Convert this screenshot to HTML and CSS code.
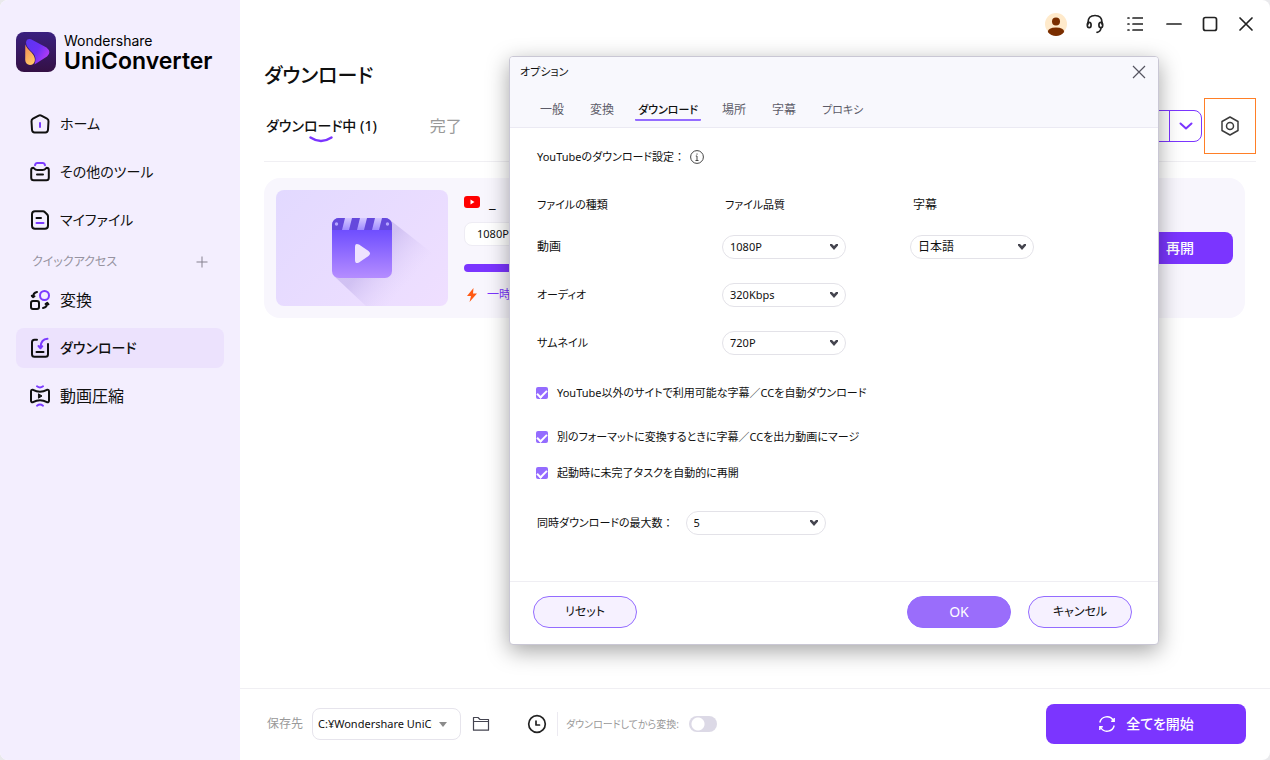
FILE: index.html
```html
<!DOCTYPE html>
<html lang="ja">
<head>
<meta charset="utf-8">
<meta name="viewport" content="width=device-width, initial-scale=1">
<title>Wondershare UniConverter</title>
<link rel="stylesheet" href="styles.css">
</head>
<body>
<div class="app">
  <aside class="sidebar">
    <div class="brand">
      <svg class="brand-mark" viewBox="0 0 40 40" aria-hidden="true">
        <defs>
          <linearGradient id="tile" x1="0" y1="0" x2="0" y2="1"><stop offset="0" stop-color="#3a207f"/><stop offset="1" stop-color="#341044"/></linearGradient>
          <linearGradient id="play" x1="0" y1="0" x2="1" y2=".6"><stop offset="0" stop-color="#5a35f0"/><stop offset=".55" stop-color="#6d30f5"/><stop offset="1" stop-color="#b43cf5"/></linearGradient>
          <linearGradient id="flame" x1="0" y1="0" x2=".5" y2="1"><stop offset="0" stop-color="#f08a55"/><stop offset="1" stop-color="#ffc566"/></linearGradient>
        </defs>
        <rect width="40" height="40" rx="8" fill="url(#tile)"/>
        <path d="M10 10.500Q10.500 6.200 15 7.200L30.500 15.500Q36 20 31 24.500L18.500 32.500Q21 25 17 21Q10 15 10 10.500Z" fill="url(#play)"/>
        <path d="M9.300 12.500Q10.500 16 15.500 20.500Q19.500 25 18.800 29Q17.800 33 14 33Q9.500 32.500 9.200 28Z" fill="url(#flame)"/>
      </svg>
      <div class="brand-text">
        <span class="brand-small">Wondershare</span>
        <span class="brand-name">UniConverter</span>
      </div>
    </div>
    <nav class="nav" aria-label="メイン">
      <a class="nav-item" href="#home">
        <svg viewBox="0 0 20 20" class="nav-icon"><path d="M8.700 1.700 3 4.700Q1.400 5.500 1.500 7.200L2 15.800Q2.200 18.500 4.600 18.500H15.400Q17.800 18.500 18 15.800L18.500 7.200Q18.600 5.500 17 4.700L11.300 1.700Q10 1 8.700 1.700Z"/><path class="accent" d="M10 9V13"/></svg>
        <span>ホーム</span>
      </a>
      <a class="nav-item" href="#tools">
        <svg viewBox="0 0 20 20" class="nav-icon"><path class="accent" d="M5 3.200Q5.500 1 7.300 1H12.700Q14.500 1 15 3.200"/><path d="M3.500 5.800Q1.200 5.800 1.200 8V15.800Q1.200 18.300 3.700 18.300H16.300Q18.800 18.300 18.800 15.800V8Q18.800 5.800 16.500 5.800Q14.500 8 12.500 8H7.500Q5.500 8 3.500 5.800ZM7 12.500H13"/></svg>
        <span>その他のツール</span>
      </a>
      <a class="nav-item" href="#files">
        <svg viewBox="0 0 20 20" class="nav-icon"><path d="M5 1.200H13Q14 1.200 15 2.200L17 4.200Q18 5.200 18 6.200V15.500Q18 18.800 15 18.800H5Q2 18.800 2 15.800V4.200Q2 1.200 5 1.200ZM6.500 8H11"/><path class="accent" d="M6.500 13H13.500"/></svg>
        <span>マイファイル</span>
      </a>
      <div class="nav-label">
        <span>クイックアクセス</span>
        <button class="icon-btn add" type="button" aria-label="追加"><svg viewBox="0 0 12 12"><path d="M6 .5V11.500M.5 6H11.500"/></svg></button>
      </div>
      <a class="nav-item wide-text" href="#convert">
        <svg viewBox="0 0 20 20" class="nav-icon"><rect x="1" y="11" width="8" height="8" rx="2"/><circle class="accent" cx="14.500" cy="5.500" r="4.500"/><path d="M3 7Q3 3 7 2M1.800 5.800 3 7.200 4.500 6.200M17.300 13Q17.300 17 13 18M15.500 14 17.300 12.800 18.500 14.300"/></svg>
        <span>変換</span>
      </a>
      <a class="nav-item active" href="#download" aria-current="page">
        <svg viewBox="0 0 20 20" class="nav-icon"><path d="M7 1.800H4.500Q2 1.800 2 4.300V16.300Q2 18.800 4.500 18.800H15.500Q18 18.800 18 16.300V6M6.500 14H13.500"/><path class="accent" d="M17.500 .8Q11 1.200 10.500 9M8.500 8 10.500 10.300 12.300 8.200"/></svg>
        <span>ダウンロード</span>
      </a>
      <a class="nav-item wide-text" href="#compress">
        <svg viewBox="0 0 20 20" class="nav-icon"><path d="M3 3.800Q10 7.500 17 3.800Q19 3.500 19 5.500V14.500Q19 16.500 17 16.200Q10 12.500 3 16.200Q1 16.500 1 14.500V5.500Q1 3.500 3 3.800Z"/><path d="M8.800 8 12 10 8.800 12Z" fill="#101010" stroke-width="1"/><path class="accent" d="M7 .3Q10 2.500 13 .3M7 19.700Q10 17.500 13 19.700"/></svg>
        <span>動画圧縮</span>
      </a>
    </nav>
  </aside>

  <main class="main">
    <header class="topbar">
      <div class="bar-group">
        <button class="icon-btn" type="button" aria-label="アカウント"><svg width="22" height="24" viewBox="0 0 22 24"><circle cx="11" cy="12" r="11" fill="#ffeacb"/><circle cx="11" cy="9.500" r="4" fill="#7a2e00"/><path d="M2.800 20Q3 15.500 11 15.500Q19 15.500 19.200 20Q16 24 11 24Q6 24 2.800 20Z" fill="#7a2e00"/></svg></button>
        <button class="icon-btn" type="button" aria-label="サポート"><svg class="line" width="18" height="20" viewBox="0 0 18 20"><path d="M2 10V8.500Q2 1.500 9 1.500Q16 1.500 16 8.500V10"/><ellipse cx="3.200" cy="11" rx="1.900" ry="2.700"/><ellipse cx="14.800" cy="11" rx="1.900" ry="2.700"/><path d="M15 14Q14.500 18 11 18.300"/></svg></button>
        <button class="icon-btn" type="button" aria-label="メニュー"><svg class="line" width="16" height="16" viewBox="0 0 16 16"><path d="M1 2H2M6 2H15.500M1 8H2M6 8H15.500M1 14H2M6 14H15.500"/></svg></button>
      </div>
      <div class="bar-group window">
        <button class="icon-btn" type="button" aria-label="最小化"><svg class="line" width="16" height="16" viewBox="0 0 16 16"><path d="M1 8H15"/></svg></button>
        <button class="icon-btn" type="button" aria-label="最大化"><svg class="line" width="16" height="16" viewBox="0 0 16 16"><rect x="1.500" y="1.500" width="13" height="13" rx="2"/></svg></button>
        <button class="icon-btn" type="button" aria-label="閉じる"><svg class="line" width="16" height="16" viewBox="0 0 16 16"><path d="M2 2 14 14M14 2 2 14"/></svg></button>
      </div>
    </header>

    <section class="content">
      <h1 class="title">ダウンロード</h1>
      <div class="toolbar">
        <div class="tabs" role="tablist">
          <button class="tab selected" type="button" role="tab" aria-selected="true">ダウンロード中 (1)<svg class="smile" viewBox="0 0 24 7"><path d="M1.500 1.500Q12 8.500 22.500 1.500"/></svg></button>
          <button class="tab" type="button" role="tab" aria-selected="false">完了</button>
        </div>
        <div class="tools">
          <div class="split">
            <button class="split-main" type="button" aria-label="URLを貼り付け"></button>
            <button class="split-more" type="button" aria-label="その他"><svg width="14" height="8" viewBox="0 0 14 8"><path d="M1.500 1.500 7 6.500 12.500 1.500"/></svg></button>
          </div>
          <button class="settings" type="button" aria-label="設定"><svg width="20" height="20" viewBox="0 0 20 20"><path d="M10 1 18 5.500V14.500L10 19 2 14.500V5.500Z"/><circle cx="10" cy="10" r="3.500"/></svg></button>
        </div>
      </div>
      <article class="card">
        <div class="thumb">
          <svg width="172" height="116" viewBox="0 0 172 116" aria-hidden="true">
            <defs>
              <linearGradient id="clap" x1="0" y1="0" x2="0" y2="1"><stop offset=".15" stop-color="#6a4aff"/><stop offset="1" stop-color="#b58dff"/></linearGradient>
              <linearGradient id="cast" gradientUnits="userSpaceOnUse" x1="86" y1="58" x2="140" y2="105"><stop offset=".2" stop-color="#b8a6e6" stop-opacity=".5"/><stop offset=".8" stop-color="#d9c8f8" stop-opacity="0"/></linearGradient>
              <linearGradient id="stripe" x1="0" y1="0" x2="0" y2="1"><stop offset="0" stop-color="#d4c8ff"/><stop offset="1" stop-color="#a08cff"/></linearGradient>
              <clipPath id="round"><rect x="56" y="28" width="60" height="60" rx="7"/></clipPath>
            </defs>
            <path d="M114 30 165 70V116H90L58 86Z" fill="url(#cast)"/>
            <g clip-path="url(#round)">
              <rect x="56" y="28" width="60" height="60" fill="url(#clap)"/>
              <rect x="56" y="28" width="60" height="12" fill="#6549dc"/>
              <path d="M69 28H76L73 40H66ZM84 28H91L88 40H81ZM99 28H106L103 40H96Z" fill="url(#stripe)"/>
            </g>
            <circle cx="60.500" cy="34" r="1.700" fill="#b5a5ff"/><circle cx="111.500" cy="34" r="1.700" fill="#b5a5ff"/>
            <path d="M79 57Q79 52.500 83 54.500L92.500 61Q95.500 63.500 92.500 66L83 72.500Q79 74.500 79 70Z" fill="#eee3ff"/>
          </svg>
        </div>
        <div class="task">
          <div class="task-name"><svg width="16" height="12" viewBox="0 0 16 12"><rect width="16" height="12" rx="3" fill="#f00"/><path d="M6.500 3.500 10.500 6 6.500 8.500Z" fill="#fff"/></svg><span>_</span></div>
          <span class="chip">1080P</span>
          <div class="progress"></div>
          <div class="status"><svg width="10" height="14" viewBox="0 0 10 14"><path d="M6.500 0 0 8H4L2.500 14 10 5.500H6Z" fill="#ff5a14"/></svg><span>一時停止</span></div>
        </div>
        <button class="resume" type="button">再開</button>
      </article>
    </section>

    <footer class="bottom">
      <label class="muted" for="dest">保存先</label>
      <div class="path-box">
        <select id="dest" class="path"><option>C:¥Wondershare UniConverter</option></select>
        <svg class="path-arrow" viewBox="0 0 8 5"><path d="M0 0H8L4 5Z"/></svg>
      </div>
      <button class="icon-btn folder" type="button" aria-label="フォルダーを開く"><svg class="thin" width="18" height="16" viewBox="0 0 18 16"><path d="M1.500 14.200V1.500H6L8 3.500H16.500V14.200ZM1.500 5.500H16.500"/></svg></button>
      <button class="icon-btn clock" type="button" aria-label="スケジュール"><svg class="line" width="20" height="20" viewBox="0 0 20 20"><circle cx="10" cy="10" r="8.300"/><path d="M9 7V11H12.500"/></svg></button>
      <label class="muted after" for="after">ダウンロードしてから変換:</label>
      <input class="switch" id="after" type="checkbox" role="switch">
      <button class="start" type="button"><svg width="18" height="18" viewBox="0 0 18 18"><path d="M1.800 7.500A7.300 7.300 0 0 1 15.300 5.500M16.200 3V6.300H13.200M16.200 10.500A7.300 7.300 0 0 1 2.700 12.500M1.800 15V11.700H4.800"/></svg><span>全てを開始</span></button>
    </footer>
  </main>

  <section class="dialog" role="dialog" aria-labelledby="dlg-title">
    <header class="dlg-head">
      <div class="dlg-bar">
        <h2 class="dlg-title" id="dlg-title">オプション</h2>
        <button class="icon-btn dlg-close" type="button" aria-label="閉じる"><svg width="14" height="14" viewBox="0 0 14 14"><path d="M1 1 13 13M13 1 1 13"/></svg></button>
      </div>
      <div class="dlg-tabs" role="tablist">
        <button class="dlg-tab wide-text" type="button" role="tab">一般</button>
        <button class="dlg-tab wide-text" type="button" role="tab">変換</button>
        <button class="dlg-tab selected" type="button" role="tab" aria-selected="true">ダウンロード</button>
        <button class="dlg-tab wide-text" type="button" role="tab">場所</button>
        <button class="dlg-tab wide-text" type="button" role="tab">字幕</button>
        <button class="dlg-tab" type="button" role="tab">プロキシ</button>
      </div>
    </header>
    <div class="dlg-body">
      <div class="heading"><span>YouTubeのダウンロード設定<span class="colon">：</span></span><svg width="14" height="14" viewBox="0 0 14 14"><circle cx="7" cy="7" r="6.400"/><path d="M7 6V10.500M7 3.500V4.700M5.800 6H7M5.500 10.500H8.500"/></svg></div>
      <div class="grid grid-head"><span>ファイルの種類</span><span class="col">ファイル品質</span><span class="col wide-text">字幕</span></div>
      <div class="grid-rows">
        <div class="grid">
          <label class="wide-text" for="video">動画</label>
          <div class="pick"><select id="video"><option>1080P</option></select><svg viewBox="0 0 8 6"><path d="M0 0H2L4 2 6 0H8V1.500L4 6 0 1.500Z"/></svg></div>
          <div class="pick wide-text"><select aria-label="字幕"><option>日本語</option></select><svg viewBox="0 0 8 6"><path d="M0 0H2L4 2 6 0H8V1.500L4 6 0 1.500Z"/></svg></div>
        </div>
        <div class="grid">
          <label for="audio">オーディオ</label>
          <div class="pick"><select id="audio"><option>320Kbps</option></select><svg viewBox="0 0 8 6"><path d="M0 0H2L4 2 6 0H8V1.500L4 6 0 1.500Z"/></svg></div>
        </div>
        <div class="grid">
          <label for="image">サムネイル</label>
          <div class="pick"><select id="image"><option>720P</option></select><svg viewBox="0 0 8 6"><path d="M0 0H2L4 2 6 0H8V1.500L4 6 0 1.500Z"/></svg></div>
        </div>
      </div>
      <div class="checks">
        <label class="check lead"><input type="checkbox" checked><span>YouTube以外のサイトで利用可能な字幕／CCを自動ダウンロード</span></label>
        <label class="check"><input type="checkbox" checked><span>別のフォーマットに変換するときに字幕／CCを出力動画にマージ</span></label>
        <label class="check"><input type="checkbox" checked><span>起動時に未完了タスクを自動的に再開</span></label>
      </div>
      <div class="limit">
        <label for="limit">同時ダウンロードの最大数<span class="colon">：</span></label>
        <div class="pick wide"><select id="limit"><option>5</option></select><svg viewBox="0 0 8 6"><path d="M0 0H2L4 2 6 0H8V1.500L4 6 0 1.500Z"/></svg></div>
      </div>
    </div>
    <footer class="dlg-foot">
      <button class="pill" type="button">リセット</button>
      <button class="pill primary" type="button">OK</button>
      <button class="pill" type="button">キャンセル</button>
    </footer>
  </section>
</div>
</body>
</html>
```
FILE: styles.css
```css
* { box-sizing: border-box; }

body {
  margin: 0;
  background: #e9e9ec;
  color: #101010;
  font: 12px/18px "Noto Sans", "Noto Sans CJK JP", sans-serif;
  font-feature-settings: "palt";
}

button, select, input { font: inherit; color: inherit; font-feature-settings: inherit; }
button { padding: 0; border: 0; background: none; cursor: pointer; white-space: nowrap; }
a { color: inherit; text-decoration: none; }
svg { display: block; flex: none; }

.app {
  position: relative;
  display: grid;
  grid-template-columns: 240px 1fr;
  min-height: 100vh;
  border-radius: 8px;
  overflow: hidden;
  background: #fff;
}

.icon-btn { display: grid; place-items: center; }
.line { fill: none; stroke: #222; stroke-width: 1.700; stroke-linecap: round; stroke-linejoin: round; }
.thin { fill: none; stroke: #444450; stroke-width: 1.2; stroke-linejoin: round; }
.colon { font-feature-settings: normal; }

/* Sidebar */
.sidebar { padding: 32px 16px; background: #f3eefe; }
.brand { display: flex; gap: 8px; height: 40px; }
.brand-mark { width: 40px; height: 40px; }
.brand-text { display: flex; flex-direction: column; font-family: Inter, sans-serif; color: #000; }
.brand-small { font-size: 14px; line-height: 18px; }
.brand-name { font-size: 23px; line-height: 22px; font-weight: 600; }

.nav { display: grid; gap: 8px; margin-top: 32px; }
.nav-item {
  display: flex;
  align-items: center;
  gap: 10px;
  height: 40px;
  padding: 0 14px;
  border-radius: 8px;
  font-size: 14px;
  line-height: 24px;
}
.nav-item.wide-text { font-size: 16px; }
.nav-item.active { background: #ece2fd; font-weight: 500; }
.nav-icon { width: 20px; height: 20px; fill: none; stroke: #101010; stroke-width: 2; stroke-linecap: round; stroke-linejoin: round; overflow: visible; }
.nav-icon .accent { stroke: #7b3bff; }
.nav-label { display: flex; align-items: center; justify-content: space-between; height: 24px; padding: 4px 16px 0; color: #9693a0; font-size: 12px; line-height: 20px; }
.add svg { width: 12px; height: 12px; stroke: #85818f; }

/* Main column */
.main { display: flex; flex-direction: column; min-width: 0; }
.topbar { display: flex; align-items: center; justify-content: flex-end; gap: 19px; height: 48px; padding: 0 14px; }
.bar-group { display: flex; gap: 20px; }
.bar-group.window { gap: 16px; }
.topbar .icon-btn { width: 20px; height: 24px; }
.content { flex: 1; padding: 12px 25px 24px 24px; }
.title { margin: 0; font-size: 20px; line-height: 32px; font-weight: 500; }
.toolbar { display: flex; align-items: center; justify-content: space-between; height: 70px; margin-right: -11px; padding-bottom: 1px; border-bottom: 1px solid #f0eff3; }
.tabs { display: flex; gap: 53px; padding-left: 2px; }
.tab { position: relative; font-size: 16px; line-height: 24px; color: #999; }
.tab.selected { color: #101010; font-size: 14px; font-weight: 500; }
.smile { position: absolute; left: 50%; top: 100%; width: 24px; height: 7px; margin: -2px 0 0 -12px; fill: none; stroke: #7b35ff; stroke-width: 2.400; stroke-linecap: round; }
.tools { display: flex; align-items: center; gap: 2px; }
.split { display: flex; height: 32px; border: 1px solid #7b35ff; border-radius: 8px; }
.split-main { width: 160px; }
.split-more { display: grid; place-items: center; width: 32px; border-left: 1px solid #7b35ff; }
.split-more svg { fill: none; stroke: #7b35ff; stroke-width: 2; stroke-linecap: round; stroke-linejoin: round; }
.settings { display: grid; place-items: center; width: 52px; height: 56px; border: 1px solid #ff7f27; }
.settings svg { fill: none; stroke: #3c3c3c; stroke-width: 1.500; stroke-linejoin: round; }

.card { display: flex; align-items: center; gap: 16px; height: 140px; margin-top: 16px; padding: 12px; border-radius: 16px; background: #f8f6fd; }
.thumb { border-radius: 8px; overflow: hidden; background: linear-gradient(135deg, #e2d9ff, #efdfff); }
.task { flex: 1; display: grid; gap: 8px; justify-items: start; height: 116px; align-content: start; }
.task-name { display: flex; align-items: center; gap: 9px; height: 24px; font-size: 15px; }
.chip { padding: 0 12px; border-radius: 8px; background: #fff; border: 1px solid #eeecf4; font-size: 11px; line-height: 22px; }
.progress { width: 80%; height: 8px; margin-top: 10px; border-radius: 4px; background: #7b35ff; }
.status { display: flex; align-items: center; gap: 10px; margin: 6px 0 0 3px; color: #7b35ff; }
.resume { width: 106px; height: 32px; border-radius: 8px; background: #7b35ff; color: #fff; font-size: 14px; font-weight: 500; }

/* Bottom bar */
.bottom { display: flex; align-items: center; height: 72px; padding: 0 24px 1px 27px; border-top: 1px solid #f0eff3; }
.muted { color: #999; }
.path-box { position: relative; width: 149px; margin-left: 9px; }
.path { width: 100%; height: 32px; padding: 0 28px 0 5px; border: 1px solid #e6e4ec; border-radius: 8px; background: #fff; font-size: 11px; appearance: none; }
.path-arrow { position: absolute; right: 14px; top: 14px; width: 8px; height: 5px; fill: #8b8b8b; pointer-events: none; }
.folder { margin-left: 11px; }
.clock { margin-left: 37px; }
.after { margin-left: 10px; padding-left: 8px; border-left: 1px solid #eceaf1; font-size: 10px; line-height: 24px; white-space: nowrap; }
.switch { appearance: none; width: 28px; height: 16px; margin: 0 0 0 10px; border: 0; border-radius: 8px; background: radial-gradient(circle at 9px 8px, #fff 6px, transparent 7px) #dcd9e6; }
.start { display: flex; align-items: center; justify-content: center; gap: 10px; width: 200px; height: 40px; margin-left: auto; border-radius: 8px; background: #7b35ff; color: #fff; font-size: 14px; font-weight: 500; }
.start svg { fill: none; stroke: #fff; stroke-width: 1.400; }

/* Options window, floating over the page */
.dialog {
  position: absolute;
  left: 509px;
  top: 56px;
  width: 650px;
  border: 1px solid #c9c7d4;
  border-radius: 4px;
  background: #fff;
  box-shadow: 0 6px 22px rgba(0, 0, 0, .36);
  overflow: hidden;
  font-size: 11px;
}
.dialog .wide-text { font-size: 12px; }
.dlg-head { background: #f8f8fd; border-bottom: 1px solid #ebeaf3; }
.dlg-bar { display: flex; align-items: center; justify-content: space-between; height: 30px; padding: 0 12px 0 10px; }
.dlg-title { margin: 0; font-size: 11px; font-weight: 400; }
.dlg-close svg { fill: none; stroke: #555460; stroke-width: 1.200; }
.dlg-tabs { display: flex; gap: 16px; height: 40px; padding: 10px 25px 0; }
.dlg-tab { height: 24px; padding: 3px 5px 0; border-bottom: 2px solid transparent; color: #5c5b68; }
.dlg-tab.selected { padding: 3px 3px 0; border-color: #946cff; border-radius: 1px; color: #101010; font-weight: 500; }
.dlg-body { padding: 17px 26px 46px 27px; }
.heading { display: flex; align-items: center; gap: 5px; height: 24px; }
.heading svg { fill: none; stroke: #444; }
.grid { display: grid; grid-template-columns: 185px 188px 124px; align-items: center; height: 24px; }
.grid-head { margin: 24px 0 18px; }
.col { padding-left: 3px; }
.grid-rows { display: grid; gap: 24px; }
.pick { position: relative; width: 124px; }
.pick.wide { width: 140px; }
.pick select { display: block; width: 100%; height: 24px; padding: 0 24px 0 7px; border: 1px solid #e3e2e8; border-radius: 12px; background: #fff; appearance: none; }
.pick svg { position: absolute; right: 8px; top: 9px; width: 8px; height: 6px; fill: #44444e; pointer-events: none; }
.checks { display: grid; gap: 18px; margin: 29px 0; }
.check { display: flex; align-items: center; gap: 9px; margin-left: -1px; }
.check.lead { margin-bottom: 8px; }
.check input {
  appearance: none;
  display: flex;
  justify-content: center;
  width: 12px;
  height: 12px;
  margin: 0;
  padding-top: 3px;
  border-radius: 2px;
  background: #946cff;
}
.check input:checked::before { content: ""; width: 8px; height: 4px; border: solid #fff; border-width: 0 0 2px 2px; transform: rotate(-45deg); }
.limit { display: flex; align-items: center; gap: 12px; height: 24px; }
.dlg-foot { display: flex; align-items: center; gap: 17px; height: 63px; padding: 0 26px 2px 23px; border-top: 1px solid #efeef3; }
.pill { width: 104px; height: 32px; border: 1px solid #946cff; border-radius: 16px; background: #f6f1ff; font-size: 12px; }
.pill.primary { margin-left: auto; background: #9a6dfb; color: #fff; font-size: 14px; }
```
